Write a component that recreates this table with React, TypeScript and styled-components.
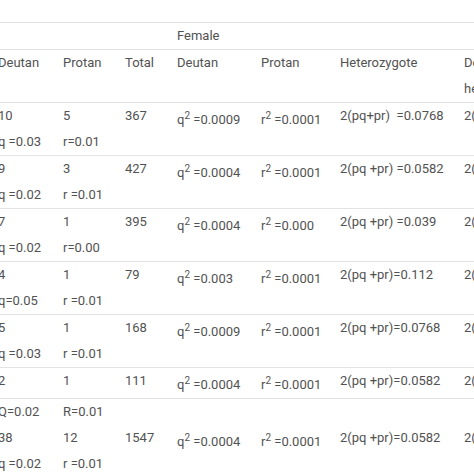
import React from 'react';
import styled, { createGlobalStyle } from 'styled-components';

const GlobalStyle = createGlobalStyle`
	body {
		margin: 0;
		background: #ffffff;
	}
`;

const Frame = styled.div`
	width: 474px;
	height: 474px;
	overflow: hidden;
	padding-top: 22px;
	box-sizing: border-box;
	background: #ffffff;
`;

const Table = styled.table`
	margin-left: -2px;
	border-collapse: collapse;
	table-layout: fixed;
	width: 606px;
	border-top: 1px solid #e3e3e3;
	font-family: Roboto, 'Liberation Sans', sans-serif;
	font-size: 13px;
	color: #525252;
`;

const Row = styled.tr<{ $ruled?: boolean }>`
	border-bottom: ${(p) => (p.$ruled ? '1px solid #e3e3e3' : 'none')};
`;

const Cell = styled.td`
	padding: 0;
	vertical-align: top;
	text-align: left;
	line-height: 26px;
	white-space: nowrap;
	font-weight: 400;
`;

const Line = styled.div`
	height: 26px;
`;

const Sup = styled.sup`
	font-size: 10px;
`;

interface DataRow {
	deutan: string[];
	protan: string[];
	total: string;
	q2: string;
	r2: string;
	het: string;
	dh: string;
}

const rows: DataRow[] = [
	{ deutan: ['10', 'q =0.03'], protan: ['5', 'r=0.01'], total: '367', q2: '0.0009', r2: '0.0001', het: '2(pq+pr)\u00a0\u00a0=0.0768', dh: '2(pq) =0.0582' },
	{ deutan: ['9', 'q =0.02'], protan: ['3', 'r =0.01'], total: '427', q2: '0.0004', r2: '0.0001', het: '2(pq +pr) =0.0582', dh: '2(pq) =0.0392' },
	{ deutan: ['7', 'q =0.02'], protan: ['1', 'r=0.00'], total: '395', q2: '0.0004', r2: '0.000', het: '2(pq +pr) =0.039', dh: '2(pq) =0.0392' },
	{ deutan: ['4', 'q=0.05'], protan: ['1', 'r =0.01'], total: '79', q2: '0.003', r2: '0.0001', het: '2(pq +pr)=0.112', dh: '2(pq) =0.095' },
	{ deutan: ['5', 'q =0.03'], protan: ['1', 'r =0.01'], total: '168', q2: '0.0009', r2: '0.0001', het: '2(pq +pr)=0.0768', dh: '2(pq) =0.0582' }
];

const Stack: React.FC<{ lines: string[] }> = ({ lines }) => (
	<>
		{lines.map((l, i) => (
			<Line key={i}>{l}</Line>
		))}
	</>
);

const Female: React.FC<{ q2: string; r2: string; het: string; dh: string }> = ({ q2, r2, het, dh }) => (
	<>
		<Cell>
			q<Sup>2</Sup> ={q2}
		</Cell>
		<Cell>
			r<Sup>2</Sup> ={r2}
		</Cell>
		<Cell>{het}</Cell>
		<Cell>{dh}</Cell>
	</>
);

export default function App() {
	return (
		<Frame>
			<GlobalStyle />
			<Table>
				<colgroup>
					<col style={{ width: 65 }} />
					<col style={{ width: 62 }} />
					<col style={{ width: 52 }} />
					<col style={{ width: 84 }} />
					<col style={{ width: 79 }} />
					<col style={{ width: 124 }} />
					<col style={{ width: 140 }} />
				</colgroup>
				<tbody>
					<Row $ruled>
						<Cell colSpan={3}></Cell>
						<Cell colSpan={4}>Female</Cell>
					</Row>
					<Row $ruled>
						<Cell>
							<Stack lines={['Deutan', '']} />
						</Cell>
						<Cell>Protan</Cell>
						<Cell>Total</Cell>
						<Cell>Deutan</Cell>
						<Cell>Protan</Cell>
						<Cell>Heterozygote</Cell>
						<Cell>
							<Stack lines={['Deutan', 'heterozygote']} />
						</Cell>
					</Row>
					{rows.map((r, i) => (
						<Row $ruled key={i}>
							<Cell>
								<Stack lines={r.deutan} />
							</Cell>
							<Cell>
								<Stack lines={r.protan} />
							</Cell>
							<Cell>{r.total}</Cell>
							<Female q2={r.q2} r2={r.r2} het={r.het} dh={r.dh} />
						</Row>
					))}
					<Row $ruled>
						<Cell>2</Cell>
						<Cell>1</Cell>
						<Cell>111</Cell>
						<Female q2="0.0004" r2="0.0001" het="2(pq +pr)=0.0582" dh="2(pq) =0.0392" />
					</Row>
					<Row>
						<Cell>Q=0.02</Cell>
						<Cell>R=0.01</Cell>
						<Cell colSpan={5}></Cell>
					</Row>
					<Row>
						<Cell>
							<Stack lines={['38', 'q =0.02']} />
						</Cell>
						<Cell>
							<Stack lines={['12', 'r =0.01']} />
						</Cell>
						<Cell>1547</Cell>
						<Female q2="0.0004" r2="0.0001" het="2(pq +pr)=0.0582" dh="2(pq) =0.0392" />
					</Row>
				</tbody>
			</Table>
		</Frame>
	);
}
